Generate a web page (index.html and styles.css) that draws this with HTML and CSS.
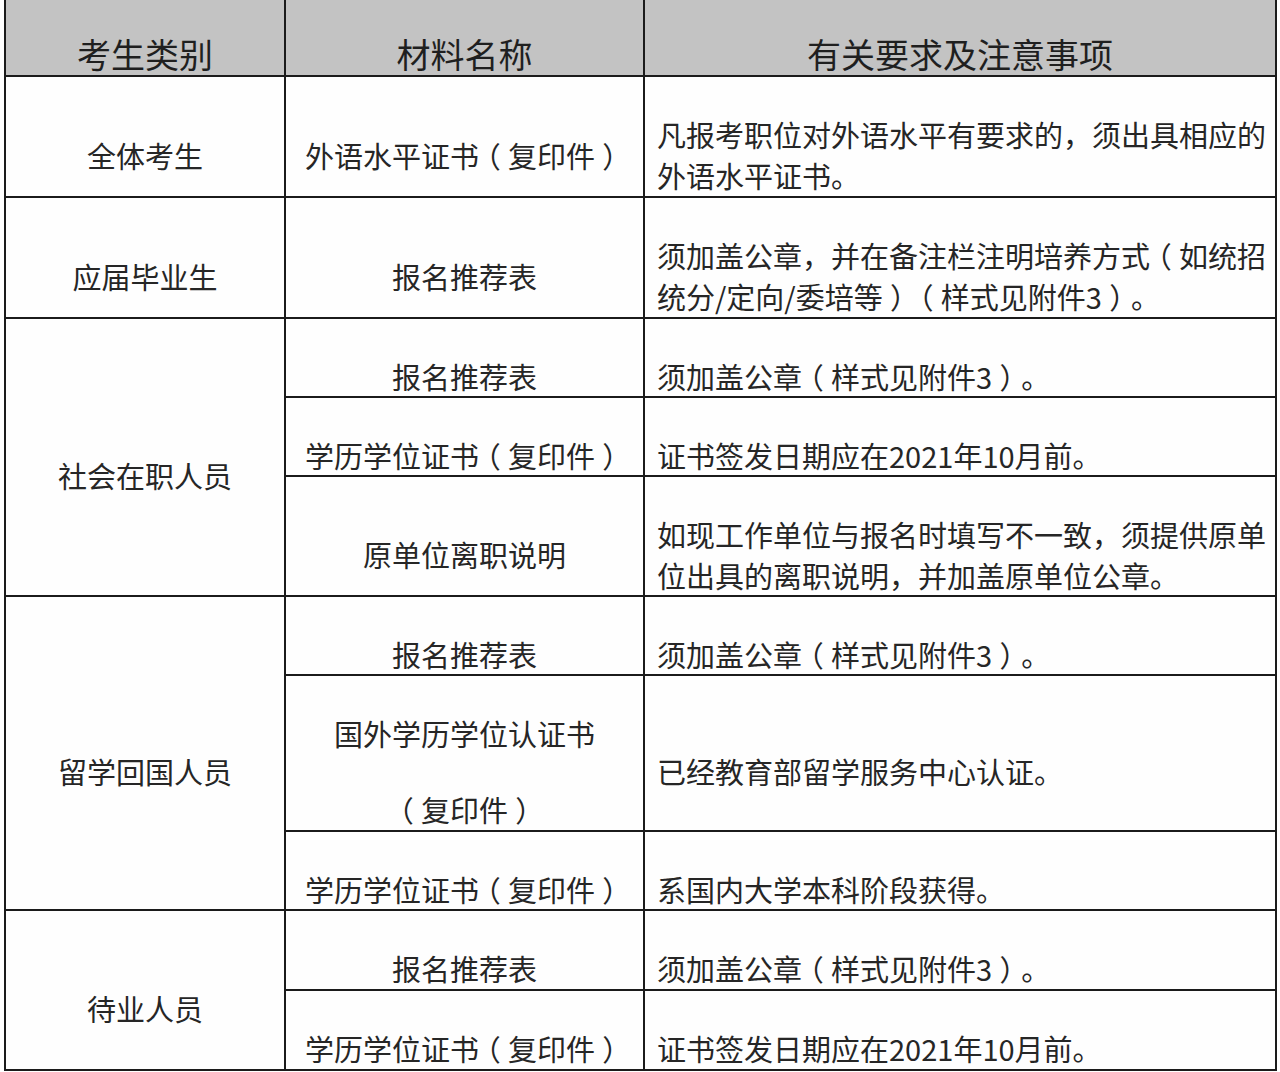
FILE: index.html
```html
<!DOCTYPE html>
<html lang="zh-CN">
<head>
<meta charset="utf-8">
<title>报名材料要求</title>
<link rel="stylesheet" href="styles.css">
</head>
<body>
<div class="sheet">
  <div class="cell head"><p>考生类别</p></div>
  <div class="cell head"><p>材料名称</p></div>
  <div class="cell head"><p>有关要求及注意事项</p></div>

  <div class="cell c"><p>全体考生</p></div>
  <div class="cell c"><p>外语水平证书<span class="pn">（</span>复印件<span class="pn">）</span></p></div>
  <div class="cell note"><p>凡报考职位对外语水平有要求的，须出具相应的外语水平证书。</p></div>

  <div class="cell c"><p>应届毕业生</p></div>
  <div class="cell c"><p>报名推荐表</p></div>
  <div class="cell note"><p>须加盖公章，并在备注栏注明培养方式<span class="pn">（</span>如统招统分/定向/委培等<span class="pn">）</span><span class="pn">（</span>样式见附件3<span class="pn">）</span>。</p></div>

  <div class="cell c span3"><p>社会在职人员</p></div>
  <div class="cell c"><p>报名推荐表</p></div>
  <div class="cell note"><p>须加盖公章<span class="pn">（</span>样式见附件3<span class="pn">）</span>。</p></div>
  <div class="cell c"><p>学历学位证书<span class="pn">（</span>复印件<span class="pn">）</span></p></div>
  <div class="cell note"><p>证书签发日期应在2021年10月前。</p></div>
  <div class="cell c"><p>原单位离职说明</p></div>
  <div class="cell note"><p>如现工作单位与报名时填写不一致，须提供原单位出具的离职说明，并加盖原单位公章。</p></div>

  <div class="cell c span3"><p>留学回国人员</p></div>
  <div class="cell c"><p>报名推荐表</p></div>
  <div class="cell note"><p>须加盖公章<span class="pn">（</span>样式见附件3<span class="pn">）</span>。</p></div>
  <div class="cell c pair"><p>国外学历学位认证书</p><p><span class="pn">（</span>复印件<span class="pn">）</span></p></div>
  <div class="cell note"><p>已经教育部留学服务中心认证。</p></div>
  <div class="cell c"><p>学历学位证书<span class="pn">（</span>复印件<span class="pn">）</span></p></div>
  <div class="cell note"><p>系国内大学本科阶段获得。</p></div>

  <div class="cell c span2"><p>待业人员</p></div>
  <div class="cell c"><p>报名推荐表</p></div>
  <div class="cell note"><p>须加盖公章<span class="pn">（</span>样式见附件3<span class="pn">）</span>。</p></div>
  <div class="cell c"><p>学历学位证书<span class="pn">（</span>复印件<span class="pn">）</span></p></div>
  <div class="cell note"><p>证书签发日期应在2021年10月前。</p></div>
</div>
</body>
</html>
```
FILE: styles.css
```css
html, body {
  margin: 0;
  padding: 0;
  background: #ffffff;
}

body {
  font-family: "Noto Sans CJK SC", "Noto Sans", sans-serif;
  color: #262626;
}

.sheet {
  display: grid;
  grid-template-columns: 278px 357px 630px;
  grid-template-rows: 75px 119px 119px 77px 77px 118px 77px 154px 77px 78px 78px;
  gap: 2px;
  padding: 0 2px 2px 2px;
  margin-left: 4px;
  width: max-content;
  background: #1b1b1b;
}

.cell {
  background: #fefefe;
  display: flex;
  flex-direction: column;
  justify-content: center;
  padding-top: 37px;
  font-size: 29px;
  line-height: 41px;
  box-sizing: border-box;
}

.cell p {
  margin: 0;
}

.c {
  align-items: center;
  text-align: center;
}

.note {
  padding-left: 12px;
  padding-right: 8px;
  text-align: left;
}

.head {
  background: #c3c3c3;
  color: #1f1f1f;
  justify-content: flex-end;
  align-items: center;
  padding: 0 0 1px 0;
  font-size: 34px;
  line-height: 40px;
}

.span2 {
  grid-row: span 2;
}

.span3 {
  grid-row: span 3;
}

.pair {
  gap: 35px;
}

/* full-width parentheses centred in their em box, as in the source document */
.pn {
  font-feature-settings: "halt";
  padding: 0 0.25em;
}
```
